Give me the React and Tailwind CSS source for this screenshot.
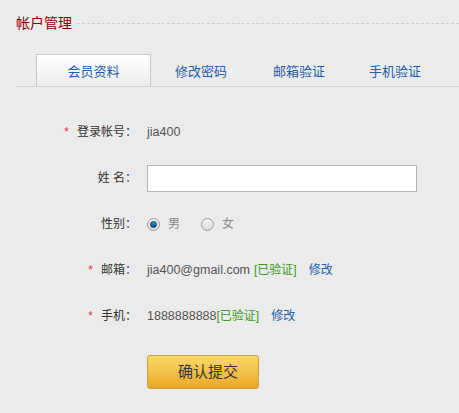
const FONT = { fontFamily: '"Liberation Sans", "Noto Sans CJK SC", sans-serif' };

const TABS = [
  { label: '会员资料', width: 'w-[115px]', active: true },
  { label: '修改密码', width: 'w-[100px]' },
  { label: '邮箱验证', width: 'w-[96px]' },
  { label: '手机验证', width: 'w-[96px]' },
];

function Star() {
  return <span className="text-[#e4393c] mr-[8px] text-[12px]">*</span>;
}

function Row({ label, required, children }) {
  return (
    <div className="flex items-center h-[46px]">
      <div className="w-[137px] flex justify-end items-center text-[12px] text-[#333]">
        {required && <Star />}
        <span>{label}</span>
      </div>
      <div className="ml-[10px] flex items-center text-[12px] text-[#555]">{children}</div>
    </div>
  );
}

function Radio({ checked }) {
  return (
    <span className="w-[13px] h-[13px] rounded-full border border-[#9a9a9a] bg-gradient-to-b from-[#f4f4f4] to-[#d8d8d8] flex items-center justify-center">
      {checked && <span className="w-[7px] h-[7px] rounded-full bg-gradient-to-b from-[#3a8fd0] to-[#0d4f7e] border border-[#0a3a5c]" />}
    </span>
  );
}

export default function App() {
  return (
    <div className="w-[459px] h-[413px] bg-[#ebebeb] overflow-hidden" style={FONT}>
      {/* title */}
      <div className="flex items-center pl-[16px] pt-[14px]">
        <span className="text-[14px] leading-[18px] text-[#8e0000]">帐户管理</span>
        <div className="flex-1 ml-[5px] border-t border-dashed border-[#cfcfcf]" />
      </div>

      {/* tabs */}
      <div className="ml-[16px] mt-[22px] flex border-b border-[#d2d2d2] pl-[20px]">
        {TABS.map((t) =>
          t.active ? (
            <div
              key={t.label}
              className={`${t.width} h-[32px] -mb-px border border-b-0 border-[#c8c8c8] bg-gradient-to-b from-[#ffffff] to-[#ececec] flex items-center justify-center pt-[3px] text-[13px] text-[#1f5ea8]`}
            >
              {t.label}
            </div>
          ) : (
            <div
              key={t.label}
              className={`${t.width} h-[32px] flex items-center justify-center pt-[3px] text-[13px] text-[#1f5ea8]`}
            >
              {t.label}
            </div>
          )
        )}
      </div>

      {/* form */}
      <div className="mt-[22px]">
        <Row label="登录帐号：" required>
          <span className="text-[12.5px]">jia400</span>
        </Row>
        <Row label="姓 名：">
          <input
            type="text"
            className="w-[270px] h-[27px] bg-white border border-[#b4b4b4] outline-none px-1"
          />
        </Row>
        <Row label="性别：">
          <Radio checked />
          <span className="ml-[8px] text-[#888]">男</span>
          <span className="ml-[21px]">
            <Radio />
          </span>
          <span className="ml-[8px] text-[#888]">女</span>
        </Row>
        <Row label="邮箱：" required>
          <span className="text-[12.5px]">jia400@gmail.com</span>
          <span className="ml-[4px] text-[#3a9a1a]">[已验证]</span>
          <span className="ml-[12px] text-[#1f5ea8]">修改</span>
        </Row>
        <Row label="手机：" required>
          <span className="text-[12.5px]">1888888888</span>
          <span className="text-[#3a9a1a]">[已验证]</span>
          <span className="ml-[12px] text-[#1f5ea8]">修改</span>
        </Row>
        <div className="flex mt-[16px]">
          <button className="ml-[147px] w-[112px] h-[34px] rounded-[3px] border border-[#c9a04a] bg-gradient-to-b from-[#fbd866] to-[#eaa823] text-[15px] text-[#333] pl-[10px]">
            确认提交
          </button>
        </div>
      </div>
    </div>
  );
}
